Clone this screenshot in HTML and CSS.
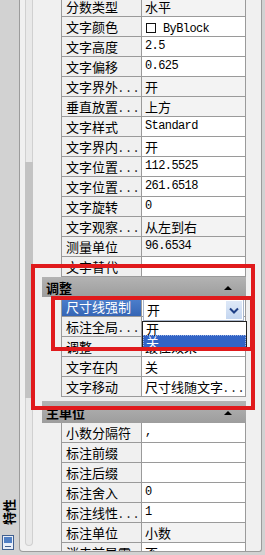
FILE: index.html
```html
<!DOCTYPE html>
<html lang="zh-CN">
<head>
  <meta charset="UTF-8" />
  <meta name="viewport" content="width=device-width, initial-scale=1.0"/>
  <title>特性</title>
  <link rel="stylesheet" href="styles.css">
</head>
<body>

  <div class="window">
    <div class="titlebar">
      <span class="title">特性</span>
      <svg class="title-icon" width="12" height="15" viewBox="0 0 12 15">
        <rect x="0.5" y="0.5" width="11" height="14" fill="#e8eef8" stroke="#41608f"/>
        <rect x="2" y="2" width="8" height="6" fill="#4f7fc4"/>
        <line x1="3" y1="11.5" x2="9" y2="11.5" stroke="#41608f"/>
      </svg>
    </div>

    <div class="palette">
      <div class="gutter">
        <div class="scrollbar"><div class="thumb"></div></div>
      </div>

      <div class="grid">
        <div class="row"><div class="name">分数类型</div><div class="value ro">水平</div></div>
        <div class="row"><div class="name">文字颜色</div><div class="value"><span class="swatch"></span><span class="mono">ByBlock</span></div></div>
        <div class="row"><div class="name">文字高度</div><div class="value mono">2.5</div></div>
        <div class="row"><div class="name">文字偏移</div><div class="value mono">0.625</div></div>
        <div class="row"><div class="name">文字界外<span class="more">...</span></div><div class="value ro">开</div></div>
        <div class="row"><div class="name">垂直放置<span class="more">...</span></div><div class="value ro">上方</div></div>
        <div class="row"><div class="name">文字样式</div><div class="value mono">Standard</div></div>
        <div class="row"><div class="name">文字界内<span class="more">...</span></div><div class="value">开</div></div>
        <div class="row"><div class="name">文字位置<span class="more">...</span></div><div class="value mono">112.5525</div></div>
        <div class="row"><div class="name">文字位置<span class="more">...</span></div><div class="value mono">261.6518</div></div>
        <div class="row"><div class="name">文字旋转</div><div class="value mono">0</div></div>
        <div class="row"><div class="name">文字观察<span class="more">...</span></div><div class="value ro">从左到右</div></div>
        <div class="row"><div class="name">测量单位</div><div class="value ro mono">96.6534</div></div>
        <div class="row"><div class="name">文字替代</div><div class="value"></div></div>

        <div class="band">调整<span class="caret"></span></div>
        <div class="row sel">
          <div class="name">尺寸线强制</div>
          <div class="value">
            <div class="combo">开<span class="combo-btn">
              <svg width="10" height="7" viewBox="0 0 10 7"><path d="M1 1.5 L5 5.5 L9 1.5" fill="none" stroke="#1f3f86" stroke-width="2"/></svg>
            </span></div>
            <div class="droplist">
              <div class="opt">开</div>
              <div class="opt opt-on">关</div>
            </div>
          </div>
        </div>
        <div class="row"><div class="name">标注全局<span class="more">...</span></div><div class="value mono">1</div></div>
        <div class="row"><div class="name">调整</div><div class="value">最佳效果</div></div>
        <div class="row"><div class="name">文字在内</div><div class="value">关</div></div>
        <div class="row"><div class="name">文字移动</div><div class="value">尺寸线随文字<span class="more">...</span></div></div>

        <div class="band band-low">主单位<span class="caret"></span></div>
        <div class="row"><div class="name">小数分隔符</div><div class="value mono">,</div></div>
        <div class="row"><div class="name">标注前缀</div><div class="value"></div></div>
        <div class="row"><div class="name">标注后缀</div><div class="value"></div></div>
        <div class="row"><div class="name">标注舍入</div><div class="value mono">0</div></div>
        <div class="row"><div class="name">标注线性<span class="more">...</span></div><div class="value mono">1</div></div>
        <div class="row"><div class="name">标注单位</div><div class="value ro">小数</div></div>
        <div class="row"><div class="name">消去前导零</div><div class="value">否</div></div>
      </div>

      <div class="rstrip"></div>
    </div>

    <!-- red marks drawn over the screenshot -->
    <div class="mark mark-outer"></div>
    <div class="mark mark-inner"></div>
  </div>

</body>
</html>
```

FILE: styles.css
```css
body {
  margin: 0;
  font-family: "Noto Sans CJK SC", "Liberation Sans", sans-serif;
  font-size: 13px;
  color: #000;
  background: #d2d2d2;
}

.window {
  position: relative;
  width: 265px;
  height: 555px;
  display: flex;
  overflow: hidden;
  background: #d2d2d2;
}

/* vertical title bar on the left */
.titlebar {
  width: 18px;
  display: flex;
  flex-direction: column;
  align-items: center;
  justify-content: flex-end;
  padding: 0 2px 5px 0;
  box-sizing: border-box;
}

.title {
  writing-mode: vertical-rl;
  text-orientation: sideways;
  transform: rotate(180deg);
  font-weight: bold;
  font-size: 13px;
  line-height: 15px;
  margin-bottom: 10px;
}

.title-icon {
  display: block;
}

.palette {
  width: 243px;
  height: 552px;
  margin-left: 1px;
  display: flex;
  background: #f0f0f0;
  border: 1px solid #9c9c9c;
  border-top: none;
  border-radius: 0 0 3px 4px;
  box-sizing: border-box;
  overflow: hidden;
}

.gutter {
  width: 22px;
  flex: none;
}

.scrollbar {
  width: 8px;
  height: 546px;
  margin-left: 5px;
  background: #e9e9e9;
  border: 1px solid #d0d0d0;
  border-top: none;
  border-radius: 0 0 4px 4px;
  box-sizing: border-box;
  padding-top: 162px;
}

.thumb {
  height: 236px;
  margin: 0 -1px;
  background: #c3c3c3;
}

.grid {
  width: 204px;
  flex: none;
  margin-top: -3px;
}

.rstrip {
  flex: 1;
}

.row {
  position: relative;
  display: flex;
  height: 20px;
  padding-left: 19px;
  line-height: 19px;
  white-space: nowrap;
}

.name {
  width: 81px;
  padding-left: 4px;
  background: #f0f0f0;
  border-left: 1px solid #9a9a9a;
  border-right: 1px solid #9a9a9a;
  border-bottom: 1px solid #9a9a9a;
  box-sizing: border-box;
  overflow: hidden;
}

.value {
  width: 104px;
  padding-left: 3px;
  background: #fff;
  border-right: 1px solid #9a9a9a;
  border-bottom: 1px solid #9a9a9a;
  box-sizing: border-box;
  overflow: visible;
}

.value.ro {
  background: #f3f3f3;
}

.mono {
  font-family: "Liberation Mono", "Noto Sans CJK SC", monospace;
  font-size: 12px;
  letter-spacing: -0.6px;
}

.more {
  letter-spacing: 4px;
  margin-left: 1px;
}

.swatch {
  display: inline-block;
  width: 8px;
  height: 8px;
  border: 1px solid #111;
  margin: 0 7px 0 1px;
  vertical-align: -1px;
  background: #fff;
}

.band {
  height: 20px;
  display: flex;
  align-items: center;
  justify-content: space-between;
  padding: 0 14px 0 4px;
  background: linear-gradient(#b3b3b3, #9d9d9d);
  font-weight: bold;
  box-sizing: border-box;
}

.band-low {
  height: 22px;
  margin-top: 4px;
}

.caret {
  width: 0;
  height: 0;
  border-left: 4px solid transparent;
  border-right: 4px solid transparent;
  border-bottom: 4px solid #000;
  margin-top: 2px;
}

.row.sel .name {
  background: linear-gradient(#4f82cf, #3565b5);
  color: #fff;
}

.combo {
  position: absolute;
  left: 101px;
  top: 2px;
  width: 101px;
  height: 22px;
  padding-left: 3px;
  line-height: 20px;
  background: #fff;
  border: 1px solid #a9b6cb;
  box-sizing: border-box;
  z-index: 2;
}

.combo-btn {
  position: absolute;
  right: 1px;
  top: 1px;
  width: 16px;
  height: 18px;
  display: flex;
  align-items: center;
  justify-content: center;
  background: linear-gradient(#dfe9f8, #c4d6f0);
}

.droplist {
  position: absolute;
  left: 100px;
  top: 24px;
  width: 105px;
  height: 28px;
  background: #fff;
  border: 1px solid #222;
  box-sizing: border-box;
  z-index: 3;
}

.opt {
  height: 13px;
  line-height: 13px;
  padding-left: 3px;
}

.opt-on {
  background: #3264c6;
  color: #fff;
  outline: 1px dotted #9cb4e4;
  outline-offset: -1px;
}

.mark {
  position: absolute;
  border: 4px solid #e01a1c;
  box-sizing: border-box;
  z-index: 5;
}

.mark-outer {
  left: 31px;
  top: 264px;
  width: 224px;
  height: 146px;
}

.mark-inner {
  left: 51px;
  top: 296px;
  width: 203px;
  height: 55px;
}
```
